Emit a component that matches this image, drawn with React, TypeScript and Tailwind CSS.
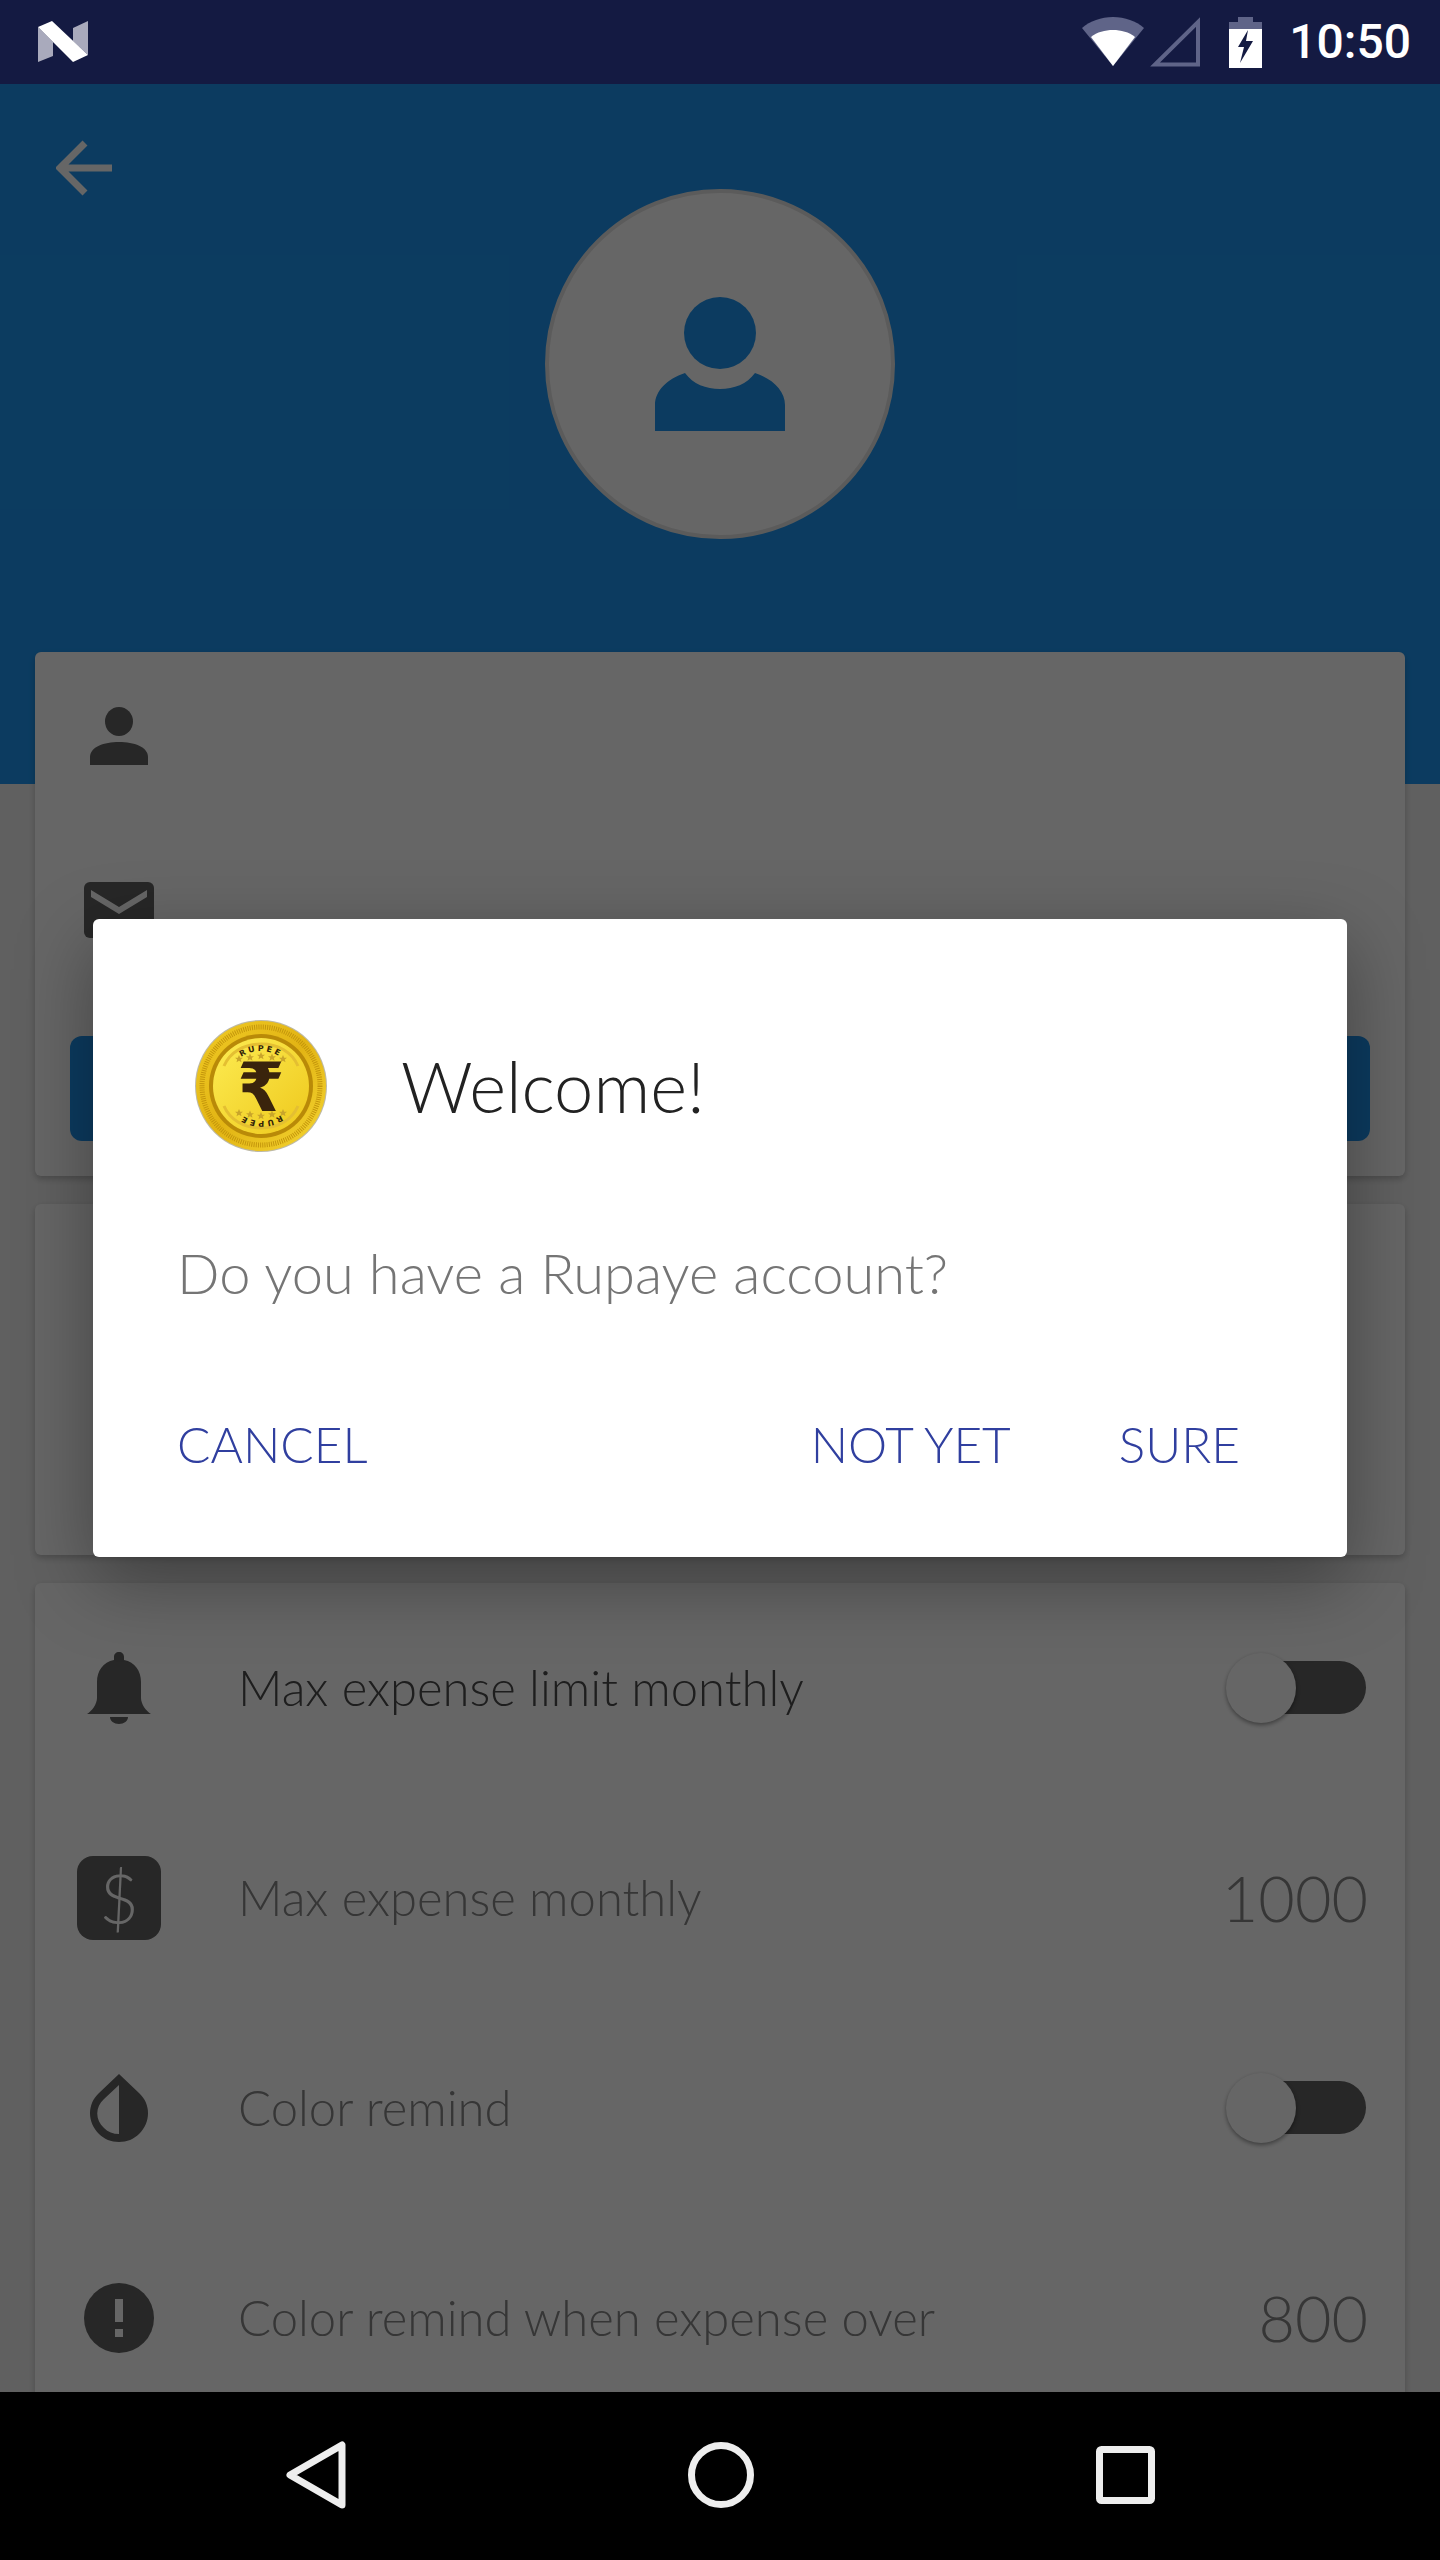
const lato = { fontFamily: 'Lato, "Open Sans", sans-serif' };

function StatusBar() {
  return (
    <div className="flex h-[84px] shrink-0 items-center justify-between bg-[#141a42] pl-[38px] pr-[29px] text-white">
      <svg width="50" height="41" viewBox="0 0 50 41" className="mb-[1px]">
        <path d="M0 6 15 21V35L0 41Z" fill="#a9aabc" />
        <path d="M35 7 50 0V34L35 20Z" fill="#a9aabc" />
        <path d="M0 6 14 0 50 34 35 41Z" fill="#fff" />
      </svg>
      <div className="flex items-center">
        <svg width="62" height="50" viewBox="0 0 62 50">
          <path d="M31 49 0 11C8 4 19 0 31 0S54 4 62 11Z" fill="#5f6488" />
          <path d="M31 49 9 20C15 15 23 13 31 13S47 15 53 20Z" fill="#fff" />
        </svg>
        <svg width="50" height="50" viewBox="0 0 50 50" className="ml-[6px]">
          <path d="M48 5V47.500H5Z" fill="none" stroke="#5f6488" strokeWidth="4" />
        </svg>
        <svg width="33" height="51" viewBox="0 0 33 51" className="ml-[29px]">
          <path d="M9 0H24V5H33V12H0V5H9Z" fill="#5f6488" />
          <path d="M0 12H33V51H0Z" fill="#fff" />
          <path d="M19 13 9 30H15L11 46 24 24H17Z" fill="#141a42" />
        </svg>
        <span className="ml-[27px] text-[48px] leading-none font-medium" style={{ fontFamily: 'Roboto, sans-serif' }}>10:50</span>
      </div>
    </div>
  );
}

const starPoints = '0,-4 1.2,-1.3 4,-1.2 1.800,0.500 2.500,3.300 0,1.800 -2.500,3.300 -1.800,0.500 -4,-1.2 -1.2,-1.3';

function Coin() {
  const stars = [-2, -1, 0, 1, 2];
  return (
    <svg width="134" height="136" viewBox="0 0 134 136" className="shrink-0">
      <defs>
        <linearGradient id="rim" x1="0" y1="0" x2="1" y2="1">
          <stop offset="0" stopColor="#f0cb25" />
          <stop offset="0.5" stopColor="#e2b414" />
          <stop offset="1" stopColor="#f5d632" />
        </linearGradient>
        <linearGradient id="field" x1="0" y1="0" x2="1" y2="1">
          <stop offset="0" stopColor="#fdec52" />
          <stop offset="1" stopColor="#eec81c" />
        </linearGradient>
        <path id="topArc" d="M32 68A35 35 0 0 1 102 68" />
      </defs>
      <circle cx="67" cy="68" r="66" fill="#bdb9a6" />
      <circle cx="67" cy="68" r="65" fill="url(#rim)" />
      <circle cx="67" cy="68" r="59" fill="none" stroke="#c4960c" strokeWidth="5" strokeDasharray="1 1.200" />
      <circle cx="67" cy="68" r="52" fill="#b98a08" />
      <circle cx="67" cy="68" r="48" fill="url(#field)" />
      <path d="M30 48C36 34 50 26 67 26S98 34 104 48" fill="none" stroke="#e4bf32" strokeWidth="3" />
      <path d="M30 88C36 102 50 110 67 110S98 102 104 88" fill="none" stroke="#e4bf32" strokeWidth="3" />
      <text fontSize="8" fontWeight="700" fill="#33230a" letterSpacing="2.500" style={{ fontFamily: '"DejaVu Sans", sans-serif' }}>
        <textPath href="#topArc" startOffset="50%" textAnchor="middle">RUPEE</textPath>
      </text>
      <text fontSize="8" fontWeight="700" fill="#33230a" letterSpacing="2.500" style={{ fontFamily: '"DejaVu Sans", sans-serif' }} transform="rotate(180 67 68)">
        <textPath href="#topArc" startOffset="50%" textAnchor="middle">RUPEE</textPath>
      </text>
      {stars.map((s) => (
        <polygon key={`t${s}`} points={starPoints} fill="#c9a52b" transform={`translate(${67 + s * 11} ${38 + Math.abs(s) * 1.5})`} />
      ))}
      {stars.map((s) => (
        <polygon key={`b${s}`} points={starPoints} fill="#c9a52b" transform={`translate(${67 + s * 11} ${98 - Math.abs(s) * 1.5})`} />
      ))}
      <text x="67" y="93" textAnchor="middle" fontSize="68" fontWeight="700" fill="#3a240c" style={{ fontFamily: '"DejaVu Sans", sans-serif' }}>₹</text>
    </svg>
  );
}

function Toggle() {
  return (
    <div className="relative mr-[2px] h-[70px] w-[140px] shrink-0">
      <div className="absolute top-[8px] right-0 h-[53px] w-[120px] rounded-full bg-[#616161]" />
      <div className="absolute top-0 left-0 h-[70px] w-[70px] rounded-full bg-white shadow-[0_2px_4px_rgba(0,0,0,0.4)]" />
    </div>
  );
}

function Row({ icon, label, dark, children }: { icon: React.ReactNode; label: string; dark?: boolean; children: React.ReactNode }) {
  return (
    <div className="flex h-[210px] shrink-0 items-center">
      <div className="flex w-[84px] shrink-0 justify-center">{icon}</div>
      <span className={`mb-[2px] ml-[77px] flex-1 text-[49px] leading-none font-light ${dark ? 'text-[#4b4b4b]' : 'text-[#878787]'}`}>{label}</span>
      <div className="flex justify-end">{children}</div>
    </div>
  );
}

export default function App() {
  return (
    <div className="flex h-[2560px] w-[1440px] flex-col overflow-hidden bg-black" style={lato}>
      <StatusBar />

      <div className="relative h-[2308px] shrink-0 overflow-hidden bg-[#f0f0f0]">
        {/* Header */}
        <div className="relative flex h-[700px] justify-center bg-[#1e95f0] pt-[105px]">
          <svg width="56" height="56" viewBox="0 0 56 56" className="absolute top-[56px] left-[56px]">
            <path d="M56 28H6M29 3 4 28 29 53" fill="none" stroke="#fff" strokeWidth="7" />
          </svg>
          <div className="flex h-[350px] w-[350px] items-center justify-center rounded-full border-[4px] border-[#e4e4e4] bg-white">
            <svg width="130" height="134" viewBox="0 0 130 134">
              <circle cx="65" cy="36" r="36" fill="#1e95f0" />
              <path d="M0 134V108C0 94 12 82 30 76 38 87 51 92 65 92S92 87 100 76C118 82 130 94 130 108V134Z" fill="#1e95f0" />
            </svg>
          </div>
        </div>

        <div className="mt-[-132px] flex flex-col px-[35px]">
          {/* Name / mail card */}
          <div className="relative flex h-[524px] flex-col rounded-[6px] bg-white px-[35px] shadow-[0_3px_6px_rgba(0,0,0,0.22)]">
            <div className="mt-[55px] ml-[14px] flex w-[70px] justify-center">
              <svg width="58" height="58" viewBox="0 0 58 58">
                <ellipse cx="29" cy="14.500" rx="14" ry="14.500" fill="#616161" />
                <path d="M0 58V50C0 40 14 35 29 35S58 40 58 50V58Z" fill="#616161" />
              </svg>
            </div>
            <div className="mt-[117px] ml-[14px] flex">
              <svg width="70" height="56" viewBox="0 0 70 56">
                <rect width="70" height="56" rx="6" fill="#616161" />
                <path d="M7 8V15L35 32 63 15V8L35 25Z" fill="#fff" />
              </svg>
            </div>
            <div className="mt-[98px] h-[105px] rounded-[12px] bg-[#1e95f0]" />
          </div>

          <div className="mt-[28px] h-[351px] rounded-[6px] bg-white shadow-[0_3px_6px_rgba(0,0,0,0.22)]" />

          {/* Settings card */}
          <div className="mt-[28px] flex flex-col rounded-[6px] bg-white pr-[37px] pl-[42px] shadow-[0_3px_6px_rgba(0,0,0,0.22)]">
            <Row
              dark
              label="Max expense limit monthly"
              icon={
                <svg width="64" height="72" viewBox="0 0 64 72">
                  <path d="M32 0C29 0 27 2 27 5V8C16 10 10 19 10 30V46C10 52 5 59 0 62H64C59 59 54 52 54 46V30C54 19 48 10 37 8V5C37 2 35 0 32 0ZM23 65H41C41 69 37 72 32 72S23 69 23 65Z" fill="#616161" />
                </svg>
              }
            >
              <Toggle />
            </Row>
            <Row
              label="Max expense monthly"
              icon={
                <div className="flex h-[84px] w-[84px] items-center justify-center rounded-[16px] bg-[#616161] text-[68px] leading-none font-light text-white">$</div>
              }
            >
              <span className="mb-[2px] text-[63px] leading-none font-light text-[#878787]">1000</span>
            </Row>
            <Row
              label="Color remind"
              icon={
                <svg width="58" height="68" viewBox="0 0 58 68">
                  <path d="M29 0 9 19C-3 30-3 48 9 60 14 65 21 68 29 68S44 65 49 60C61 48 61 30 49 19ZM29 60C23 60 18 58 14 54 5 46 5 33 14 25L29 11Z" fill="#616161" fillRule="evenodd" />
                </svg>
              }
            >
              <Toggle />
            </Row>
            <Row
              label="Color remind when expense over"
              icon={
                <svg width="70" height="70" viewBox="0 0 70 70">
                  <circle cx="35" cy="35" r="35" fill="#616161" />
                  <path d="M31 16H39V39H31ZM31 46H39V54H31Z" fill="#fff" />
                </svg>
              }
            >
              <span className="mb-[2px] text-[63px] leading-none font-light text-[#878787]">800</span>
            </Row>
          </div>
        </div>

        {/* Scrim */}
        <div className="absolute inset-0 bg-black/60" />

        {/* Dialog */}
        <div className="absolute top-[835px] left-[93px] flex h-[638px] w-[1254px] flex-col rounded-[6px] bg-white shadow-[0_24px_76px_rgba(0,0,0,0.35)]">
          <div className="mt-[99px] ml-[101px] flex items-center">
            <Coin />
            <span className="ml-[73px] text-[70.500px] leading-none font-light text-[#222]">Welcome!</span>
          </div>
          <p className="mt-[91px] ml-[84px] text-[56px] leading-none font-light text-[#757575]">Do you have a Rupaye account?</p>
          <div className="mt-[119px] flex items-center pr-[107px] pl-[84px] text-[49.500px] leading-none font-light text-[#303f9f]">
            <span>CANCEL</span>
            <span className="ml-auto">NOT YET</span>
            <span className="ml-[108px]">SURE</span>
          </div>
        </div>
      </div>

      {/* Nav bar */}
      <div className="flex h-[168px] shrink-0 items-center bg-black pb-[2px]">
        <svg width="60" height="68" viewBox="0 0 60 68" className="ml-[286px]">
          <path d="M56 4V64L4 34Z" fill="none" stroke="#eee" strokeWidth="7" strokeLinejoin="round" />
        </svg>
        <svg width="66" height="66" viewBox="0 0 66 66" className="ml-[342px]">
          <circle cx="33" cy="33" r="29.500" fill="none" stroke="#eee" strokeWidth="7" />
        </svg>
        <svg width="59" height="58" viewBox="0 0 59 58" className="ml-[342px]">
          <rect x="3.500" y="3.500" width="52" height="51" rx="2" fill="none" stroke="#eee" strokeWidth="7" />
        </svg>
      </div>
    </div>
  );
}
